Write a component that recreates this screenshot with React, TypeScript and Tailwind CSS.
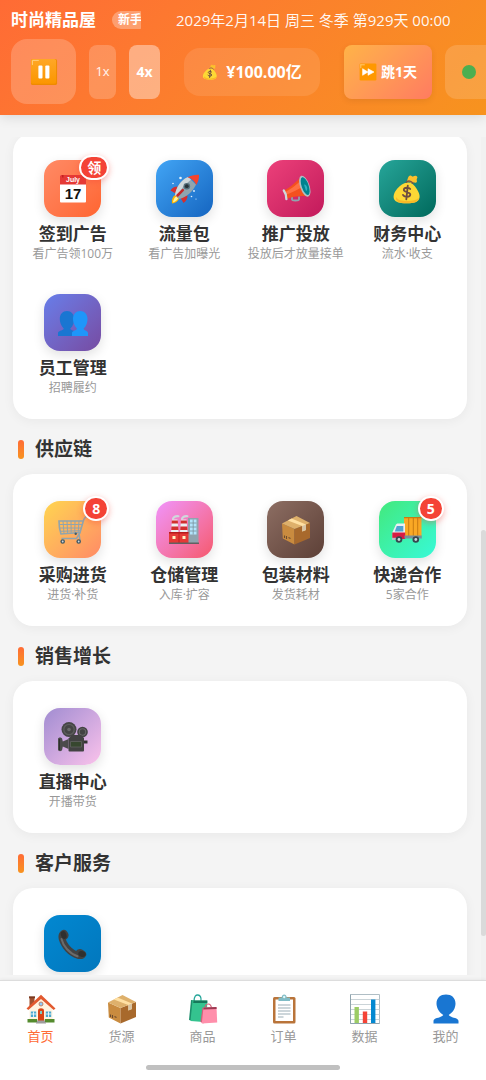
import type { ReactNode } from "react";
import clsx from "clsx";

type MenuItem = {
  id: string;
  label?: string;
  hint?: string;
  tile: string;
  icon: ReactNode;
  badge?: string;
};

const Svg = ({ className, children }: { className?: string; children: ReactNode }) => (
  <svg viewBox="0 0 30 30" className={className ?? "w-[30px] h-[30px]"} aria-hidden="true">
    {children}
  </svg>
);

const PauseIcon = ({ className }: { className?: string }) => (
  <Svg className={className}>
    <defs>
      <linearGradient id="key" x1="0" y1="0" x2="0" y2="1">
        <stop offset="0" stopColor="#ffa726" />
        <stop offset="1" stopColor="#fb9600" />
      </linearGradient>
    </defs>
    <rect x="1" y="1" width="28" height="28" rx="2" fill="#ef8a00" />
    <rect x="1" y="1" width="27" height="26.5" rx="2" fill="url(#key)" />
    <path d="M3 2.6h6M2.6 3v4" stroke="#ffd180" strokeWidth="1" strokeLinecap="round" />
    <rect x="9" y="8" width="4.4" height="14" rx="1" fill="#fff" />
    <rect x="16.4" y="8" width="4.4" height="14" rx="1" fill="#fff" />
  </Svg>
);

const SkipIcon = ({ className }: { className?: string }) => (
  <Svg className={className}>
    <rect x="1" y="1" width="28" height="28" rx="2" fill="#ff9800" />
    <path d="M3 3h6M3 3v5" stroke="#ffd180" strokeWidth="1.4" strokeLinecap="round" />
    <path d="M6 9.500 15 15l-9 5.500zM15 9.500 25 15l-10 5.500z" fill="#fff" stroke="#fff" strokeWidth="1" strokeLinejoin="round" />
  </Svg>
);

const MoneyBagIcon = ({ className }: { className?: string }) => (
  <Svg className={className}>
    <path d="M15 7c1-3 1-4.500 3-5.500 1.500-.6 1.800 1.400 3 1 1.300-.6 3.200-1.500 4.200.2.700 1.300-.7 1.800-.5 3 .2 1.600.800 2.600-1 3-1.500.3-2-.8-4 .6z" fill="#fbc02d" />
    <path d="M15.200 8.500c4-.6 6.800 2 9.600 6.500 2.800 4.500 4 8.500 1.400 11.500-2.400 2.600-7 2.800-11.600 2.800-5 0-9.500-.3-11.800-3-2.600-3.200-.6-8.200 2.800-12 2.700-3 5.600-5.400 9.600-5.800z" fill="#fdd835" />
    <path d="M4 23c2 3.500 7 4.200 12 4 4.500-.1 8-.8 10.800-3-.3 4-5 5.300-12.200 5.300C8 29.300 3 28 4 23z" fill="#f9b928" />
    <path d="M14.300 8.300c1.800-1.600 4.500-1.500 6.800 1" stroke="#795548" strokeWidth="1.500" fill="none" strokeLinecap="round" />
    <path d="M18.200 15c-1-1.600-6.200-2-6.400.9-.2 2.800 6.800 1.600 6.500 4.800-.3 2.900-6.200 2.700-7.300.2M15.800 11.700l-1.500 13.600" stroke="#6d4c41" strokeWidth="1.800" fill="none" strokeLinecap="round" />
  </Svg>
);

const CalendarIcon = () => (
  <Svg>
    <rect x="2" y="1" width="26" height="27.500" rx="1" fill="#fff" />
    <path d="M2 2a1 1 0 0 1 1-1h24a1 1 0 0 1 1 1v8.500H2z" fill="#e53935" />
    <path d="M4.800 1v2.600M25.200 1v2.600" stroke="#b71c1c" strokeWidth="1.200" />
    <text x="15" y="8" textAnchor="middle" fontSize="7" fontWeight="700" fill="#fff" fontFamily="Liberation Sans, sans-serif">
      July
    </text>
    <text x="15" y="25" textAnchor="middle" fontSize="15" fontWeight="700" fill="#111" fontFamily="Liberation Sans, sans-serif">
      17
    </text>
  </Svg>
);

const RocketIcon = () => (
  <Svg>
    <path d="M3 29.500c-.6-3.400.6-7.500 4-9l3.500 3.500c-1.200 3.400-4.500 5.200-7.500 5.500z" fill="#ffb300" />
    <path d="M4 28.500c.2-2.500 1.200-4.800 3.300-6l1.800 1.800c-1 2.200-3 3.600-5.100 4.200z" fill="#fff59d" />
    <path d="M8.500 12.500c-3 0-5.500 1.200-7 4l5.500 3.300zM18.500 21.500c0 3-1.300 5.800-4 7.500l-3.200-5.500z" fill="#d32f2f" />
    <path d="M6 21c1-7.500 6-15 13-18l8 7.500c-3 7-9.500 13-17 14.500z" fill="#90a4ae" />
    <path d="M6 21c1-7.500 6-15 13-18l3 2.800C16 10 11 16 8 23z" fill="#cfd8dc" />
    <path d="M18.500 3.300C22 1.500 26 .6 30 .8c.2 3.800-.9 7.200-2.700 10.200-1.300-3.400-4.800-6.800-8.800-7.700z" fill="#f4432c" />
    <circle cx="17.800" cy="12.200" r="3.300" fill="#546e7a" />
    <circle cx="17.800" cy="12.200" r="1.900" fill="#263238" />
    <path d="m8.500 21.500 5.300-5.300" stroke="#c62828" strokeWidth="2.500" strokeLinecap="round" />
    <g fill="#e3f2fd">
      <circle cx="11.500" cy="4" r="1.300" />
      <circle cx="4" cy="9.500" r=".8" />
      <circle cx="25" cy="17" r=".9" />
      <circle cx="22.500" cy="22.500" r=".8" />
      <circle cx="27" cy="25" r=".6" />
    </g>
  </Svg>
);

const MegaphoneIcon = () => (
  <Svg>
    <path d="M11 22.500v3c0 1.300 7 1.300 7 0v-3" fill="none" stroke="#90a4ae" strokeWidth="1.800" />
    <path d="M20 2.500c-4 5-11 11-17.500 14.500l2.800 8C12 22.500 20 21.500 27.500 22.500z" fill="#f4511e" />
    <path d="M20.500 6C15 11.500 9 15.500 3.500 18.500l.8 2.500C11 18.500 18 15 23 12z" fill="#ff7043" />
    <path d="M2.800 16.500c1.700 2.300 2.600 5.400 2.600 8.700" stroke="#cfd8dc" strokeWidth="2.300" fill="none" strokeLinecap="round" />
    <ellipse cx="23.800" cy="12.200" rx="4.700" ry="11" transform="rotate(-19 23.800 12.200)" fill="#b0bec5" />
    <ellipse cx="24.200" cy="12.100" rx="3.500" ry="9.300" transform="rotate(-19 24.200 12.100)" fill="#00838f" />
    <path d="M23 10.500c1.800.2 3 1.500 3.200 3.500.2 1.800-.4 2.800-1.200 3z" fill="#4dd0e1" opacity=".6" />
  </Svg>
);

const PeopleIcon = () => (
  <Svg>
    <path d="M0 28v-3c0-2.400 4.500-2.200 5.800-4.300-3-3.200-4-7-4-9.700 0-5 3-8 7.200-8s7.200 3 7.200 8c0 3-1 6.800-4 9.700C13.500 22.800 18 22.600 18 25v3z" fill="#1976d2" />
    <path d="M14 28v-3c0-2.400 3.800-2.200 5-4.300-3-3.200-4-7-4-9.700 0-5 3-8 7.200-8s7.300 3 7.300 8c0 3-1 6.800-4 9.700 1.200 2.100 4.500 1.900 4.500 4.300v3z" fill="#1e96fa" />
  </Svg>
);

const CartIcon = () => (
  <Svg>
    <g fill="none" stroke="#90a4ae">
      <path d="M29 1.500c-2.500.4-3 2-3.800 5L22 17.500 3 19c-1.500-4-2-8.500-2-13h25" strokeWidth="1.600" />
      <path d="M1.200 9.500h23.500M1.700 13h22M2.200 16.300l20.600-.6M5 6l1 12.500M9 6l.6 12.300M13 6l.2 12M17 6l-.3 11.800M21 6l-.8 11.500" strokeWidth="1" />
      <path d="m22 17.500-3.500 6H3.500M21 18.500l1 7" strokeWidth="1.500" />
    </g>
    <g fill="#455a64">
      <circle cx="4.700" cy="26.500" r="2.300" />
      <circle cx="20.700" cy="26.500" r="2.300" />
      <circle cx="17.700" cy="18.800" r="1.200" />
    </g>
    <g fill="#cfd8dc">
      <circle cx="4.700" cy="26.500" r=".9" />
      <circle cx="20.700" cy="26.500" r=".9" />
    </g>
  </Svg>
);

const FactoryIcon = () => (
  <Svg>
    <path d="M4 3.500c1-2 3-2.600 5.500-2.300M13 3.500c1-2 3-2.600 5.500-2.300" stroke="#cfd8dc" strokeWidth="2" fill="none" strokeLinecap="round" />
    <path d="M19 3h10.500v25H19z" fill="#90a4ae" />
    <path d="M21 4.500h6.500v15H21z" fill="#b3e5fc" />
    <path d="M21 8h6.500M21 12h6.500M21 16h6.500M24.200 4.500v15" stroke="#78909c" strokeWidth=".8" />
    <path d="M3 4.500h5.500l1 13H2zM12 4.500h5.500l1 13H11z" fill="#eceff1" />
    <path d="M2.800 5.500h6l.2 3H2.600zM2.400 11.500h6.800l.3 3.500H2.200zM11.800 5.500h6l.2 3h-6.400zM11.400 11.500h6.800l.3 3.500h-7.300z" fill="#d32f2f" />
    <path d="M0 17.500h19.500V28H0z" fill="#e53935" />
    <path d="M0 17h19.500v1.500H0zM9.600 18.500h.8V28h-.8z" fill="#b71c1c" />
    <path d="M3.500 21h3v3h-3zM13.500 21h3v3h-3z" fill="#fff3c4" />
    <path d="M0 27.500h30V29H0z" fill="#616161" />
  </Svg>
);

const BoxIcon = () => (
  <Svg>
    <path d="M1 8.500 13.500 14v15.500L1.800 23.500z" fill="#c98b3f" />
    <path d="M13.500 14 29 8v15L13.500 29.500z" fill="#a8692c" />
    <path d="M1 8.500 15.500 1 29 8l-15.500 6z" fill="#deb06b" />
    <path d="m6.800 5.500 3.700-1.900L25 9.600v5.500l-3.700 1.400V11z" fill="#ffe0a3" />
    <path d="M21.300 11 25 9.600v5.500l-3.700 1.400z" fill="#d7c4a5" />
    <path d="m3.500 20.500 0 2.500M5.500 21l0 3M7.500 22.500l2 1" stroke="#6d4c2f" strokeWidth="1.100" />
  </Svg>
);

const TruckIcon = () => (
  <Svg>
    <path d="M12 2h17.500v19H12z" fill="#f9a825" />
    <path d="M12 2h17.500v1.300H12zM16.200 2h1v19h-1zM20.800 2h1v19h-1zM25.200 2h1v19h-1z" fill="#c87b12" />
    <path d="M3.500 10.500C4 9 5 8.500 6 8.500h7V23H.5v-6z" fill="#eceff1" />
    <path d="M4.800 11h6.500v5.500H2.800z" fill="#4fa3d1" />
    <path d="M.3 17.500h12.900V24H.3z" fill="#d81b43" />
    <path d="M12.500 20.500h17.300v3H12.500z" fill="#78909c" />
    <path d="M0 22.800h5V25H0z" fill="#b0bec5" />
    <circle cx="7" cy="24.500" r="3.300" fill="#37474f" />
    <circle cx="23.800" cy="24.500" r="3.300" fill="#37474f" />
    <circle cx="7" cy="24.500" r="1.400" fill="#cfd8dc" />
    <circle cx="23.800" cy="24.500" r="1.400" fill="#cfd8dc" />
  </Svg>
);

const CameraIcon = () => (
  <Svg>
    <circle cx="11" cy="7.500" r="7.500" fill="#454545" />
    <circle cx="11" cy="7.500" r="5.200" fill="none" stroke="#5d5d5d" strokeWidth="1.300" />
    <circle cx="11" cy="7.500" r="1.800" fill="#6b6b6b" />
    <circle cx="24.500" cy="10" r="5.300" fill="#424242" />
    <circle cx="24.500" cy="10" r="3.200" fill="none" stroke="#666" strokeWidth="1.100" />
    <path d="M14 13h9l3 3v12.500a1 1 0 0 1-1 1H11.500a1 1 0 0 1-1-1V16.500z" fill="#424242" />
    <path d="M0 17c0-2 4-2 4.200 0l.6 2.500L10.500 17v10l-5.700-2.500-.6 3c-.2 2.200-4.200 2.200-4.200 0z" fill="#4b4b4b" />
    <path d="M26 18.500h3.500v3H26z" fill="#333" />
    <path d="M12.500 19.500h11v5.500h-11z" fill="#37472f" stroke="#666" strokeWidth=".7" />
    <path d="M1.500 17v11" stroke="#2f2f2f" strokeWidth="1" />
  </Svg>
);

const PhoneIcon = () => (
  <Svg>
    <path d="M4 1.200c2.600-1.700 5.500.8 6.400 3.800.7 2.500-.6 4.600-2.500 5.600 1.500 4.400 5.600 9 10.300 11.400 1.500-1.800 3.800-2.600 6.200-1.200 2.600 1.500 4.800 3.600 3.600 6-1.400 3-5 4.200-8.700 3C10.300 27 3 18.800.8 10.500-.2 6.600 1 3 4 1.200z" fill="#424242" />
    <path d="M3.500 10c1.600 7 8 14.500 16 17.300" stroke="#6b6b6b" strokeWidth="2" fill="none" strokeLinecap="round" />
    <ellipse cx="5.700" cy="6" rx="2.800" ry="4" transform="rotate(-18 5.700 6)" fill="#303030" />
    <ellipse cx="24" cy="25" rx="3.800" ry="2.800" transform="rotate(20 24 25)" fill="#303030" />
  </Svg>
);

const HouseIcon = () => (
  <Svg>
    <path d="M3.500 3h5v9h-5z" fill="#a1502f" />
    <path d="M3 2.300h6v2H3z" fill="#7b3a20" />
    <path d="M3.500 14 15 3l11.500 11v14h-23z" fill="#fff3e0" />
    <path d="M15 .8 29.500 14.500l-1.800 1.600L15 5 2.300 16.100.5 14.500z" fill="#e2592f" />
    <path d="M12 16.500c0-3 6-3 6 0V27h-6z" fill="#d84315" />
    <path d="M14 17h2v3h-2z" fill="#80cbc4" />
    <path d="M4.800 17.500h5.400v5.500H4.800zM19.800 17.500h5.400v5.500h-5.400z" fill="#4ba9cf" />
    <path d="M7.500 17.500V23M4.800 20h5.400M22.500 17.500V23M19.800 20h5.400" stroke="#fff" strokeWidth=".8" />
    <path d="M1.500 25h9.700v3.500H1.500zM18.800 25h9.700v3.500h-9.700z" fill="#558b2f" />
    <path d="M11 26.500h8V28h-8zM10 28h10v1.500H10z" fill="#9e9e9e" />
    <circle cx="15" cy="10" r="2" fill="#90caf9" stroke="#bf6b45" strokeWidth=".8" />
  </Svg>
);

const BagsIcon = () => (
  <Svg>
    <path d="M6 7.500C6 2 8 .8 10 1s3.500 2 3 6.500" fill="none" stroke="#26a69a" strokeWidth="1.300" />
    <path d="m3 6 4 .5L5.500 27 1 26z" fill="#1b8f6b" />
    <path d="M4.500 6.500h14.800l-.6 21.800L2.500 27z" fill="#34c38f" />
    <path d="M5.500 6.500h13.800V9H5.200z" fill="#15775a" />
    <path d="M17 15.500c0-4 1-5.500 3-5.500s3.500 1.500 3.500 5" fill="none" stroke="#d05c74" strokeWidth="1.200" />
    <path d="m14.500 13.500-2 14.500 3 1.500 1-15.500z" fill="#d65f7c" />
    <path d="M15.500 13.500 28.500 13l.7 15.500-15.400 1z" fill="#ff8fab" />
    <path d="m15.500 13.500 13-.5.1 2-13.300.5z" fill="#9c3b52" />
  </Svg>
);

const ClipboardIcon = () => (
  <Svg>
    <rect x="4" y="3" width="22.500" height="26.500" rx="1.500" fill="#b9743a" />
    <path d="M6.500 5.500H24V27H6.500z" fill="#fff" />
    <path d="M9 11h12.500M9 14h12.500M9 17h12.500M9 20h12.500M9 23h5.500" stroke="#90a4ae" strokeWidth=".9" />
    <path d="M9.500 3.500h3.200c0-4 5-4 5 0H21V7H9.500z" fill="#80bcc6" />
    <circle cx="15.200" cy="3" r="1.200" fill="#e0f7fa" />
  </Svg>
);

const ChartIcon = () => (
  <Svg>
    <path d="M.5.500h29v29H.5z" fill="#fff" stroke="#b0bec5" />
    <path d="M.5 5.500h29M.5 10.500h29M.5 15.500h29M.5 20.500h29M.5 25.500h29" stroke="#c5cfd4" strokeWidth=".9" />
    <path d="M4.500 13h4.400v16.500H4.500z" fill="#9ccc65" />
    <path d="M12.800 17.500h4.400v12h-4.400z" fill="#f44336" />
    <path d="M21 5.500h4.400v24H21z" fill="#0288d1" />
    <path d="M.5.500v29h29" stroke="#90a4ae" fill="none" />
  </Svg>
);

const PersonIcon = () => (
  <Svg>
    <path d="M2.500 29.500V27c0-3.500 8-3 9.800-6C7.500 18 5.500 13 5.500 9.500c0-5.700 4-9 9.500-9s9.500 3.300 9.500 9c0 4-2 8.700-6.800 11.500 1.800 3 9.800 2.500 9.800 6v2.500z" fill="#1976d2" />
  </Svg>
);

const sections: { title?: string; items: MenuItem[] }[] = [
  {
    items: [
      { id: "checkin", label: "签到广告", hint: "看广告领100万", tile: "from-[#ff8a65] to-[#ff6530]", icon: <CalendarIcon />, badge: "领" },
      { id: "traffic", label: "流量包", hint: "看广告加曝光", tile: "from-[#42a5f5] to-[#1565c0]", icon: <RocketIcon /> },
      { id: "promote", label: "推广投放", hint: "投放后才放量接单", tile: "from-[#ec407a] to-[#c2185b]", icon: <MegaphoneIcon /> },
      { id: "finance", label: "财务中心", hint: "流水·收支", tile: "from-[#26a69a] to-[#00695c]", icon: <MoneyBagIcon /> },
      { id: "staff", label: "员工管理", hint: "招聘履约", tile: "from-[#667eea] to-[#764ba2]", icon: <PeopleIcon /> },
    ],
  },
  {
    title: "供应链",
    items: [
      { id: "purchase", label: "采购进货", hint: "进货·补货", tile: "from-[#ffd54f] to-[#ff8a65]", icon: <CartIcon />, badge: "8" },
      { id: "warehouse", label: "仓储管理", hint: "入库·扩容", tile: "from-[#f093fb] to-[#f5576c]", icon: <FactoryIcon /> },
      { id: "packing", label: "包装材料", hint: "发货耗材", tile: "from-[#8d6e63] to-[#5d4037]", icon: <BoxIcon /> },
      { id: "express", label: "快递合作", hint: "5家合作", tile: "from-[#43e97b] to-[#38f9d7]", icon: <TruckIcon />, badge: "5" },
    ],
  },
  {
    title: "销售增长",
    items: [{ id: "live", label: "直播中心", hint: "开播带货", tile: "from-[#a18cd1] to-[#fbc2eb]", icon: <CameraIcon /> }],
  },
  {
    title: "客户服务",
    items: [{ id: "service", tile: "from-[#0288d1] to-[#0277bd]", icon: <PhoneIcon /> }],
  },
];

const tabs = [
  { label: "首页", icon: <HouseIcon /> },
  { label: "货源", icon: <BoxIcon /> },
  { label: "商品", icon: <BagsIcon /> },
  { label: "订单", icon: <ClipboardIcon /> },
  { label: "数据", icon: <ChartIcon /> },
  { label: "我的", icon: <PersonIcon /> },
];

const MenuButton = ({ item }: { item: MenuItem }) => (
  <button
    aria-label={item.label ?? item.id}
    className="flex flex-col items-center min-h-[126px] pt-[14px] pb-2 whitespace-nowrap"
  >
    <span
      className={clsx(
        "relative w-[57px] h-[57px] rounded-2xl bg-linear-135 flex items-center justify-center shadow-[0_4px_12px_rgba(0,0,0,0.12)]",
        item.tile
      )}
    >
      {item.icon}
      {item.badge && (
        <span className="absolute -top-[5px] -right-2 h-[25px] min-w-[26px] px-[6px] rounded-full border-2 border-white bg-[#f44336] text-white text-sm leading-[21px] font-bold shadow-[0_2px_6px_rgba(244,67,54,0.4)]">
          {item.badge}
        </span>
      )}
    </span>
    {item.label && <span className="mt-[7px] text-[17px] leading-5 font-bold text-[#333]">{item.label}</span>}
    {item.hint && <span className="text-xs leading-5 text-[#999]">{item.hint}</span>}
  </button>
);

export default function App() {
  return (
    <div className="h-screen flex flex-col overflow-hidden bg-[#f4f4f4] font-['Open_Sans','Noto_Sans_CJK_SC',sans-serif]">
      {/* Header */}
      <header className="shrink-0 bg-linear-135 from-[#ff6b35] to-[#f7931e] pl-[11px] pt-2 pb-[11px] overflow-hidden text-white shadow-[0_2px_12px_rgba(0,0,0,0.12)]">
        <div className="flex items-center h-6 gap-[35px] whitespace-nowrap">
          <div className="flex items-center gap-4 w-[130px] shrink-0 overflow-hidden">
            <h1 className="text-[17px] leading-6 font-bold shrink-0">时尚精品屋</h1>
            <span className="shrink-0 rounded-full bg-white/30 px-[6px] text-xs leading-[18px] font-bold">新手</span>
          </div>
          <p className="text-[15px] leading-6 text-white/95">2029年2月14日 周三 冬季 第929天 00:00</p>
        </div>
        <div className="mt-[7px] flex items-center whitespace-nowrap">
          <button aria-label="暂停" className="w-[65px] h-[65px] shrink-0 rounded-2xl bg-white/20 flex items-center justify-center">
            <PauseIcon className="w-7 h-7" />
          </button>
          <button className="ml-[13px] w-[27px] h-[54px] shrink-0 rounded-lg bg-white/20 text-[13px] text-white/90">1x</button>
          <button className="ml-[13px] w-[31px] h-[54px] shrink-0 rounded-lg bg-white/40 text-sm font-bold">4x</button>
          <div className="ml-6 w-[136px] h-12 shrink-0 rounded-2xl bg-white/10 flex items-center justify-center gap-2 text-base font-bold">
            <MoneyBagIcon className="w-4 h-4" />
            ¥100.00亿
          </div>
          <button className="ml-6 w-[88px] h-[54px] shrink-0 rounded-lg bg-linear-135 from-[#ffb347] to-[#ff7b60] flex items-center justify-center gap-1 text-sm font-bold shadow-[0_2px_6px_rgba(0,0,0,0.08)]">
            <SkipIcon className="w-[18px] h-[18px]" />
            跳1天
          </button>
          <button aria-label="状态" className="ml-[13px] w-20 h-[54px] shrink-0 rounded-xl bg-white/15 pl-[17px]">
            <span className="block w-[14px] h-[14px] rounded-full bg-[#4caf50]" />
          </button>
        </div>
      </header>

      {/* Scrolling menu */}
      <div className="flex-1 min-h-0 flex mt-[22px]">
        <main className="flex-1 min-w-0 overflow-hidden pl-[13px] pr-[14px] mb-[5px]">
          <div className="-mt-1">
            {sections.map((section, index) => (
              <section key={section.title ?? index}>
                {section.title && (
                  <h2 className="flex items-center gap-[11px] h-[55px] pl-[5px] pt-[6px] text-[19px] font-bold text-[#333] before:w-[6px] before:h-[19px] before:rounded-full before:bg-linear-to-b before:from-[#ff6b35] before:to-[#f7931e]">
                    {section.title}
                  </h2>
                )}
                <div className="grid grid-cols-4 gap-2 px-2 py-[13px] rounded-[20px] bg-white shadow-[0_2px_12px_rgba(0,0,0,0.05)]">
                  {section.items.map((item) => (
                    <MenuButton key={item.id} item={item} />
                  ))}
                </div>
              </section>
            ))}
          </div>
        </main>
        <div className="w-[5px] shrink-0 bg-[#f1f1f1] pt-[393px]">
          <div className="h-[406px] rounded-full bg-[#dadada]" />
        </div>
      </div>

      {/* Bottom tabs */}
      <nav className="shrink-0 bg-white border-t border-[#ddd] shadow-[0_-1px_3px_rgba(0,0,0,0.05)] pt-[13px] pb-[10px] flex flex-col items-center gap-[19px]">
        <div className="self-stretch grid grid-cols-6">
          {tabs.map((tab, index) => (
            <button
              key={tab.label}
              className={clsx(
                "flex flex-col items-center gap-[2px] text-[13px] leading-5",
                index === 0 ? "text-[#ff6b35]" : "text-[#999]"
              )}
            >
              {tab.icon}
              {tab.label}
            </button>
          ))}
        </div>
        <div className="w-[194px] h-[5px] rounded-full bg-[#c0c0c0]" />
      </nav>
    </div>
  );
}
